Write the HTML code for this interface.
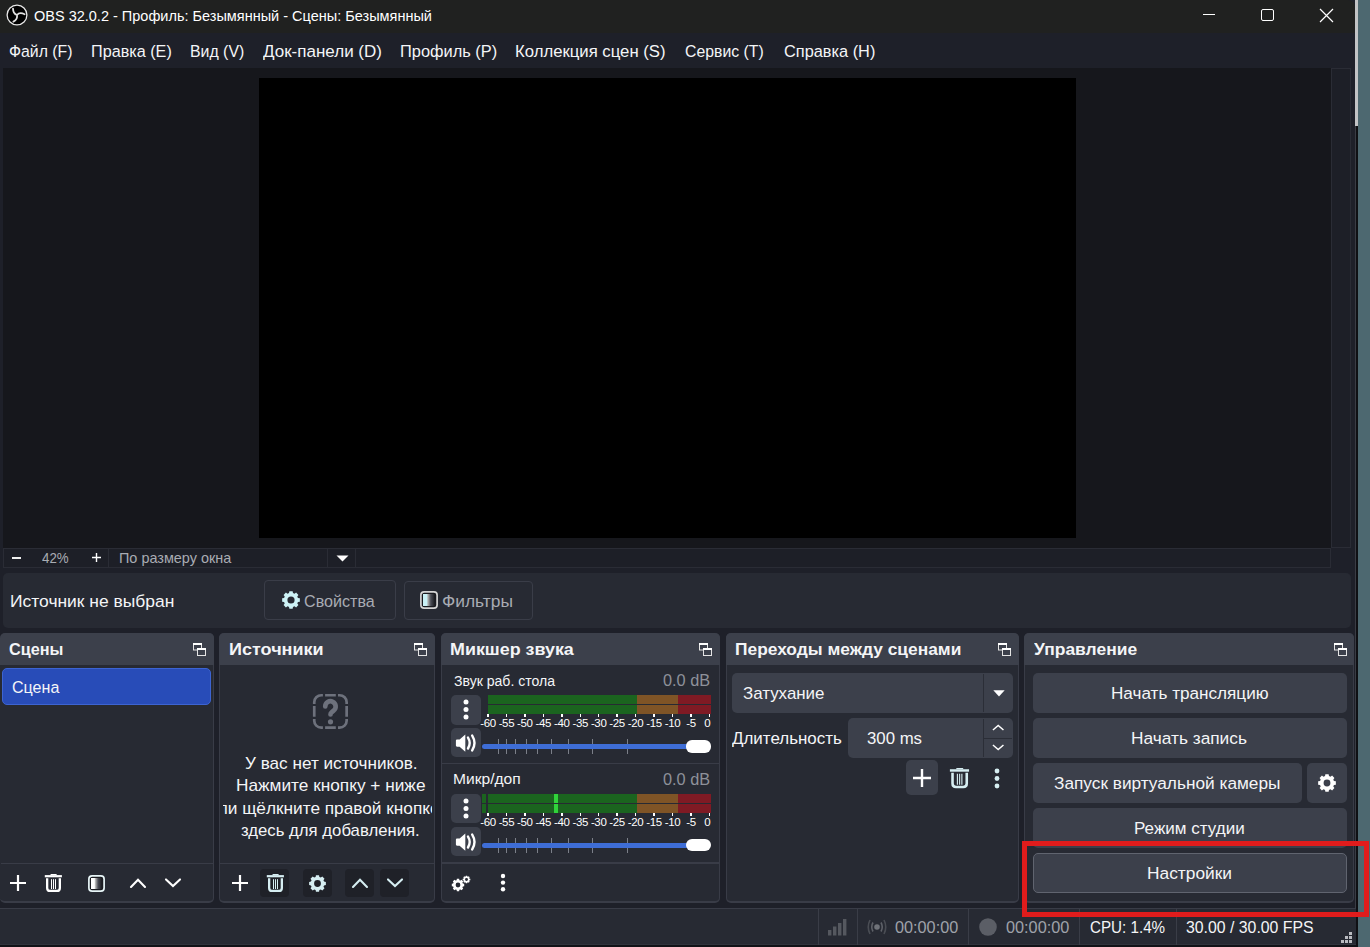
<!DOCTYPE html><html><head><meta charset="utf-8"><style>html,body{margin:0;padding:0;width:1370px;height:947px;overflow:hidden;background:#4d6870;font-family:"Liberation Sans",sans-serif;}.tx{position:absolute;white-space:nowrap;line-height:1;transform-origin:0 0;}</style></head><body>
<div style="position:absolute;left:0px;top:0px;width:1355px;height:947px;background:#1e2029;"></div>
<div style="position:absolute;left:1355px;top:0px;width:3px;height:126px;background:#c2c3c5;"></div>
<div style="position:absolute;left:1355px;top:126px;width:1px;height:821px;background:#3a3c44;"></div>
<div style="position:absolute;left:1356px;top:126px;width:2px;height:821px;background:#0f1014;"></div>
<div style="position:absolute;left:0px;top:0px;width:1355px;height:33px;background:#202120;border-top-right-radius:7px"></div>
<svg style="position:absolute;left:6px;top:4px;" width="22" height="22" viewBox="0 0 22 22"><circle cx="11" cy="11" r="9.9" fill="#000" stroke="#e8e8e8" stroke-width="1.3"/><path d="M11 11Q7.2 9.8 7 4.6M11 11Q13.6 7.8 18.6 10.2M11 11Q11.8 15.5 7.4 17.6" stroke="#e0e0e0" stroke-width="1.8" fill="none" stroke-linecap="round"/></svg>
<div style="position:absolute;left:1203px;top:14px;width:12px;height:1px;background:#ffffff;"></div>
<div style="position:absolute;left:1260.5px;top:8.5px;width:13px;height:12.5px;background:transparent;border:1.3px solid #fff;border-radius:2px;box-sizing:border-box"></div>
<svg style="position:absolute;left:1319px;top:8px;" width="15" height="15" viewBox="0 0 15 15"><path d="M1 1L14 14M14 1L1 14" stroke="#fff" stroke-width="1.2"/></svg>
<div style="position:absolute;left:0px;top:33px;width:1355px;height:35px;background:#1e2029;"></div>
<div style="position:absolute;left:3px;top:68px;width:1328px;height:480px;background:#16171c;"></div>
<div style="position:absolute;left:259px;top:78px;width:817px;height:460px;background:#000000;"></div>
<div style="position:absolute;left:1331px;top:68px;width:20px;height:480px;background:#1d1f27;border:1px solid #2a2c35;box-sizing:border-box"></div>
<div style="position:absolute;left:3px;top:548px;width:1328px;height:20px;background:#1d1f27;border:1px solid #2a2c35;box-sizing:border-box"></div>
<div style="position:absolute;left:108px;top:549px;width:1px;height:18px;background:#2a2c35;"></div>
<div style="position:absolute;left:327px;top:549px;width:1px;height:18px;background:#2a2c35;"></div>
<div style="position:absolute;left:355px;top:549px;width:1px;height:18px;background:#2a2c35;"></div>
<div style="position:absolute;left:11.5px;top:557.2px;width:9px;height:1.4px;background:#f0f0f0;"></div>
<svg style="position:absolute;left:90.6px;top:552.3px;" width="11" height="11" viewBox="0 0 11 11"><path d="M5.5 1V10M1 5.5H10" stroke="#fff" stroke-width="1.4" fill="none"/></svg>
<svg style="position:absolute;left:336px;top:555px;" width="13" height="7" viewBox="0 0 13 7"><path d="M0.5 0.5H12.5L6.5 6.5Z" fill="#fff"/></svg>
<div style="position:absolute;left:3px;top:573px;width:1348px;height:55px;background:#272a33;border-radius:5px"></div>
<div style="position:absolute;left:264px;top:580px;width:132px;height:40px;background:transparent;border:1px solid #3a3d48;border-radius:4px;box-sizing:border-box"></div>
<div style="position:absolute;left:403.5px;top:580.5px;width:129px;height:39.5px;background:transparent;border:1px solid #3a3d48;border-radius:4px;box-sizing:border-box"></div>
<svg style="position:absolute;left:280.00px;top:589.00px;" width="22" height="22" viewBox="0 0 22 22"><g transform="translate(-280.00,-589.00)"><path d="M297.92 598.01 L299.85 598.37 L299.85 601.63 L297.92 601.99 L297.30 603.49 L298.41 605.10 L296.10 607.41 L294.49 606.30 L292.99 606.92 L292.63 608.85 L289.37 608.85 L289.01 606.92 L287.51 606.30 L285.90 607.41 L283.59 605.10 L284.70 603.49 L284.08 601.99 L282.15 601.63 L282.15 598.37 L284.08 598.01 L284.70 596.51 L283.59 594.90 L285.90 592.59 L287.51 593.70 L289.01 593.08 L289.37 591.15 L292.63 591.15 L292.99 593.08 L294.49 593.70 L296.10 592.59 L298.41 594.90 L297.30 596.51Z M294.60 600.00 A3.60 3.60 0 1 0 287.40 600.00 A3.60 3.60 0 1 0 294.60 600.00Z" fill="#cdf2f6" fill-rule="evenodd"/></g></svg>
<svg style="position:absolute;left:420px;top:591px;" width="18" height="18" viewBox="0 0 18 18"><defs><linearGradient id="fg420" x1="0" x2="1"><stop offset="0" stop-color="#c9f1f6"/><stop offset="0.3" stop-color="#c9f1f6"/><stop offset="0.42" stop-color="#b0b0b0"/><stop offset="0.65" stop-color="#4a4c55"/><stop offset="1" stop-color="#17181d"/></linearGradient></defs><rect x="0.9" y="0.9" width="16.2" height="16.2" rx="3.2" fill="#1a1b20" stroke="#d4d4d4" stroke-width="1.7"/><rect x="3" y="3" width="12" height="12" fill="url(#fg420)"/></svg>
<div style="position:absolute;left:0px;top:633px;width:214px;height:270px;background:#272a33;border:1px solid #393c47;border-bottom-width:2px;border-top:none;border-left:none;border-radius:5px;box-sizing:border-box"></div>
<div style="position:absolute;left:0px;top:633px;width:214px;height:32px;background:#3c404b;border-radius:5px 5px 0 0"></div>
<div style="position:absolute;left:219px;top:633px;width:216px;height:270px;background:#272a33;border:1px solid #393c47;border-bottom-width:2px;border-top:none;border-radius:5px;box-sizing:border-box"></div>
<div style="position:absolute;left:219px;top:633px;width:216px;height:32px;background:#3c404b;border-radius:5px 5px 0 0"></div>
<div style="position:absolute;left:441px;top:633px;width:279px;height:270px;background:#272a33;border:1px solid #393c47;border-bottom-width:2px;border-top:none;border-radius:5px;box-sizing:border-box"></div>
<div style="position:absolute;left:441px;top:633px;width:279px;height:32px;background:#3c404b;border-radius:5px 5px 0 0"></div>
<div style="position:absolute;left:726px;top:633px;width:293px;height:270px;background:#272a33;border:1px solid #393c47;border-bottom-width:2px;border-top:none;border-radius:5px;box-sizing:border-box"></div>
<div style="position:absolute;left:726px;top:633px;width:293px;height:32px;background:#3c404b;border-radius:5px 5px 0 0"></div>
<div style="position:absolute;left:1024px;top:633px;width:330px;height:270px;background:#272a33;border:1px solid #393c47;border-bottom-width:2px;border-top:none;border-radius:5px;box-sizing:border-box"></div>
<div style="position:absolute;left:1024px;top:633px;width:330px;height:32px;background:#3c404b;border-radius:5px 5px 0 0"></div>
<svg style="position:absolute;left:192px;top:642px;" width="16" height="16" viewBox="0 0 16 16"><rect x="1.5" y="1.5" width="8" height="6.5" fill="none" stroke="#e4e4e4" stroke-width="1"/><rect x="1" y="1" width="9" height="2" fill="#fff"/><rect x="5.5" y="6.5" width="8" height="7" fill="#3c404b" stroke="#e4e4e4" stroke-width="1"/><rect x="5" y="6" width="9" height="2" fill="#fff"/></svg>
<svg style="position:absolute;left:413px;top:642px;" width="16" height="16" viewBox="0 0 16 16"><rect x="1.5" y="1.5" width="8" height="6.5" fill="none" stroke="#e4e4e4" stroke-width="1"/><rect x="1" y="1" width="9" height="2" fill="#fff"/><rect x="5.5" y="6.5" width="8" height="7" fill="#3c404b" stroke="#e4e4e4" stroke-width="1"/><rect x="5" y="6" width="9" height="2" fill="#fff"/></svg>
<svg style="position:absolute;left:698px;top:642px;" width="16" height="16" viewBox="0 0 16 16"><rect x="1.5" y="1.5" width="8" height="6.5" fill="none" stroke="#e4e4e4" stroke-width="1"/><rect x="1" y="1" width="9" height="2" fill="#fff"/><rect x="5.5" y="6.5" width="8" height="7" fill="#3c404b" stroke="#e4e4e4" stroke-width="1"/><rect x="5" y="6" width="9" height="2" fill="#fff"/></svg>
<svg style="position:absolute;left:997px;top:642px;" width="16" height="16" viewBox="0 0 16 16"><rect x="1.5" y="1.5" width="8" height="6.5" fill="none" stroke="#e4e4e4" stroke-width="1"/><rect x="1" y="1" width="9" height="2" fill="#fff"/><rect x="5.5" y="6.5" width="8" height="7" fill="#3c404b" stroke="#e4e4e4" stroke-width="1"/><rect x="5" y="6" width="9" height="2" fill="#fff"/></svg>
<svg style="position:absolute;left:1333px;top:642px;" width="16" height="16" viewBox="0 0 16 16"><rect x="1.5" y="1.5" width="8" height="6.5" fill="none" stroke="#e4e4e4" stroke-width="1"/><rect x="1" y="1" width="9" height="2" fill="#fff"/><rect x="5.5" y="6.5" width="8" height="7" fill="#3c404b" stroke="#e4e4e4" stroke-width="1"/><rect x="5" y="6" width="9" height="2" fill="#fff"/></svg>
<div style="position:absolute;left:2px;top:668px;width:209px;height:37px;background:#284cb8;border:1px solid #3d64d2;border-radius:5px;box-sizing:border-box"></div>
<div style="position:absolute;left:1px;top:863px;width:212px;height:1px;background:#393c47;"></div>
<svg style="position:absolute;left:9.0px;top:874.0px;" width="18" height="18" viewBox="0 0 18 18"><path d="M9.0 1V17M1 9.0H17" stroke="#fff" stroke-width="2.2" fill="none"/></svg>
<svg style="position:absolute;left:44px;top:874px;" width="20" height="21" viewBox="0 0 20 21"><g transform="scale(1.0)"><rect x="0.8" y="1.1" width="17.1" height="2.2" fill="#fff"/><path d="M6.2 1.2L6.8 0H12.4L13 1.2Z" fill="#fff"/><path d="M3.15 4.2V13.9Q3.15 16.95 6.2 16.95H12.8Q15.85 16.95 15.85 13.9V4.2" stroke="#fff" stroke-width="2.3" fill="none"/><path d="M7.5 5.2V15M9.5 5.2V15M11.5 5.2V15" stroke="#fff" stroke-width="1" fill="none"/></g></svg>
<svg style="position:absolute;left:87.5px;top:874.5px;" width="17" height="17" viewBox="0 0 17 17"><defs><linearGradient id="fg87" x1="0" x2="1"><stop offset="0" stop-color="#ffffff"/><stop offset="0.3" stop-color="#ffffff"/><stop offset="0.42" stop-color="#b0b0b0"/><stop offset="0.65" stop-color="#4a4c55"/><stop offset="1" stop-color="#17181d"/></linearGradient></defs><rect x="0.9" y="0.9" width="15.2" height="15.2" rx="3.2" fill="#1a1b20" stroke="#e8f6f8" stroke-width="1.7"/><rect x="3" y="3" width="11" height="11" fill="url(#fg87)"/></svg>
<svg style="position:absolute;left:129px;top:876px;" width="18" height="14" viewBox="0 0 18 14"><path d="M2 10.9L9 3.8L16 10.9" stroke="#fff" stroke-width="2.1" fill="none" stroke-linecap="round" stroke-linejoin="miter"/></svg>
<svg style="position:absolute;left:164px;top:876px;" width="18" height="14" viewBox="0 0 18 14"><path d="M2 3.4L9 10.1L16 3.4" stroke="#fff" stroke-width="2.1" fill="none" stroke-linecap="round" stroke-linejoin="miter"/></svg>
<svg style="position:absolute;left:311px;top:692px;" width="39" height="39" viewBox="0 0 39 39"><path d="M3.25 11.9V10.25A7 7 0 0 1 10.25 3.25H11.9M27.0 3.25H28.65A7 7 0 0 1 35.65 10.25V11.9M35.65 27.0V28.65A7 7 0 0 1 28.65 35.65H27.0M11.9 35.65H10.25A7 7 0 0 1 3.25 28.65V27.0M14.1 3.25H24.8M35.65 14.1V24.8M14.1 35.65H24.8M3.25 14.1V24.8" stroke="#6d717c" stroke-width="2.7" fill="none"/><path d="M14.25 14.45A5.2 5.2 0 1 1 22.6 18.6L20.8 20.1Q19.5 21.1 19.5 22.45" stroke="#6d717c" stroke-width="4.7" fill="none" stroke-linecap="round"/><circle cx="19.5" cy="29.8" r="2.6" fill="#6d717c"/></svg>
<div style="position:absolute;left:220px;top:863px;width:214px;height:1px;background:#393c47;"></div>
<svg style="position:absolute;left:231.0px;top:874.0px;" width="18" height="18" viewBox="0 0 18 18"><path d="M9.0 1V17M1 9.0H17" stroke="#fff" stroke-width="2.2" fill="none"/></svg>
<div style="position:absolute;left:260px;top:869px;width:28.5px;height:28px;background:#1f2128;border-radius:4px"></div>
<div style="position:absolute;left:303px;top:869px;width:28.5px;height:28px;background:#1f2128;border-radius:4px"></div>
<div style="position:absolute;left:345px;top:869px;width:28.5px;height:28px;background:#1f2128;border-radius:4px"></div>
<div style="position:absolute;left:380px;top:869px;width:28.5px;height:28px;background:#1f2128;border-radius:4px"></div>
<svg style="position:absolute;left:266px;top:874px;" width="20" height="21" viewBox="0 0 20 21"><g transform="scale(1.0)"><rect x="0.8" y="1.1" width="17.1" height="2.2" fill="#d6eef2"/><path d="M6.2 1.2L6.8 0H12.4L13 1.2Z" fill="#d6eef2"/><path d="M3.15 4.2V13.9Q3.15 16.95 6.2 16.95H12.8Q15.85 16.95 15.85 13.9V4.2" stroke="#d6eef2" stroke-width="2.3" fill="none"/><path d="M7.5 5.2V15M9.5 5.2V15M11.5 5.2V15" stroke="#d6eef2" stroke-width="1" fill="none"/></g></svg>
<svg style="position:absolute;left:306.50px;top:872.50px;" width="21" height="21" viewBox="0 0 21 21"><g transform="translate(-306.50,-872.50)"><path d="M323.54 881.12 L325.36 881.46 L325.36 884.54 L323.54 884.88 L322.95 886.29 L324.00 887.82 L321.82 890.00 L320.29 888.95 L318.88 889.54 L318.54 891.36 L315.46 891.36 L315.12 889.54 L313.71 888.95 L312.18 890.00 L310.00 887.82 L311.05 886.29 L310.46 884.88 L308.64 884.54 L308.64 881.46 L310.46 881.12 L311.05 879.71 L310.00 878.18 L312.18 876.00 L313.71 877.05 L315.12 876.46 L315.46 874.64 L318.54 874.64 L318.88 876.46 L320.29 877.05 L321.82 876.00 L324.00 878.18 L322.95 879.71Z M320.40 883.00 A3.40 3.40 0 1 0 313.60 883.00 A3.40 3.40 0 1 0 320.40 883.00Z" fill="#d6eef2" fill-rule="evenodd"/></g></svg>
<svg style="position:absolute;left:351px;top:876px;" width="18" height="14" viewBox="0 0 18 14"><path d="M2 10.9L9 3.8L16 10.9" stroke="#d6eef2" stroke-width="2.1" fill="none" stroke-linecap="round" stroke-linejoin="miter"/></svg>
<svg style="position:absolute;left:386px;top:876px;" width="18" height="14" viewBox="0 0 18 14"><path d="M2 3.4L9 10.1L16 3.4" stroke="#d6eef2" stroke-width="2.1" fill="none" stroke-linecap="round" stroke-linejoin="miter"/></svg>
<div style="position:absolute;left:451px;top:695px;width:29.5px;height:29.5px;background:#3c404b;border-radius:5px"></div>
<div style="position:absolute;left:451px;top:728.4px;width:29.5px;height:29px;background:#3c404b;border-radius:5px"></div>
<svg style="position:absolute;left:462.00px;top:698.35px;" width="8" height="23" viewBox="0 0 8 23"><circle cx="4" cy="4.00" r="2.5" fill="#fff"/><circle cx="4" cy="11.55" r="2.5" fill="#fff"/><circle cx="4" cy="19.10" r="2.5" fill="#fff"/></svg>
<svg style="position:absolute;left:455px;top:733px;" width="23" height="21" viewBox="0 0 23 21"><path d="M0.9 7.6Q0.9 6.5 2 6.5H4.6L10.3 1.4V18.7L4.6 13.7H2Q0.9 13.7 0.9 12.6Z" fill="#fff"/><path d="M13 4.6Q16.4 10 13 15.5" stroke="#fff" stroke-width="2.4" fill="none" stroke-linecap="round"/><path d="M17.2 2.6Q21.8 10 17.2 17.4" stroke="#fff" stroke-width="2.4" fill="none" stroke-linecap="round"/></svg>
<div style="position:absolute;left:488px;top:695px;width:149px;height:9px;background:#1b641f;"></div><div style="position:absolute;left:637px;top:695px;width:41px;height:9px;background:#7f5426;"></div><div style="position:absolute;left:678px;top:695px;width:33px;height:9px;background:#7f1a24;"></div><div style="position:absolute;left:488px;top:705px;width:149px;height:9px;background:#1b641f;"></div><div style="position:absolute;left:637px;top:705px;width:41px;height:9px;background:#7f5426;"></div><div style="position:absolute;left:678px;top:705px;width:33px;height:9px;background:#7f1a24;"></div>
<div style="position:absolute;left:487.25px;top:714px;width:1.5px;height:3px;background:#ffffff;"></div>
<div style="position:absolute;left:505.70px;top:714px;width:1.5px;height:3px;background:#ffffff;"></div>
<div style="position:absolute;left:524.15px;top:714px;width:1.5px;height:3px;background:#ffffff;"></div>
<div style="position:absolute;left:542.60px;top:714px;width:1.5px;height:3px;background:#ffffff;"></div>
<div style="position:absolute;left:561.05px;top:714px;width:1.5px;height:3px;background:#ffffff;"></div>
<div style="position:absolute;left:579.50px;top:714px;width:1.5px;height:3px;background:#ffffff;"></div>
<div style="position:absolute;left:597.95px;top:714px;width:1.5px;height:3px;background:#ffffff;"></div>
<div style="position:absolute;left:616.40px;top:714px;width:1.5px;height:3px;background:#ffffff;"></div>
<div style="position:absolute;left:634.85px;top:714px;width:1.5px;height:3px;background:#ffffff;"></div>
<div style="position:absolute;left:653.30px;top:714px;width:1.5px;height:3px;background:#ffffff;"></div>
<div style="position:absolute;left:671.75px;top:714px;width:1.5px;height:3px;background:#ffffff;"></div>
<div style="position:absolute;left:690.20px;top:714px;width:1.5px;height:3px;background:#ffffff;"></div>
<div style="position:absolute;left:708.65px;top:714px;width:1.5px;height:3px;background:#ffffff;"></div>
<span class="tx" style="left:468.00px;top:718.30px;width:40px;text-align:center;font-size:11.5px;color:#fff;letter-spacing:-0.35px">-60</span>
<span class="tx" style="left:486.45px;top:718.30px;width:40px;text-align:center;font-size:11.5px;color:#fff;letter-spacing:-0.35px">-55</span>
<span class="tx" style="left:504.90px;top:718.30px;width:40px;text-align:center;font-size:11.5px;color:#fff;letter-spacing:-0.35px">-50</span>
<span class="tx" style="left:523.35px;top:718.30px;width:40px;text-align:center;font-size:11.5px;color:#fff;letter-spacing:-0.35px">-45</span>
<span class="tx" style="left:541.80px;top:718.30px;width:40px;text-align:center;font-size:11.5px;color:#fff;letter-spacing:-0.35px">-40</span>
<span class="tx" style="left:560.25px;top:718.30px;width:40px;text-align:center;font-size:11.5px;color:#fff;letter-spacing:-0.35px">-35</span>
<span class="tx" style="left:578.70px;top:718.30px;width:40px;text-align:center;font-size:11.5px;color:#fff;letter-spacing:-0.35px">-30</span>
<span class="tx" style="left:597.15px;top:718.30px;width:40px;text-align:center;font-size:11.5px;color:#fff;letter-spacing:-0.35px">-25</span>
<span class="tx" style="left:615.60px;top:718.30px;width:40px;text-align:center;font-size:11.5px;color:#fff;letter-spacing:-0.35px">-20</span>
<span class="tx" style="left:634.05px;top:718.30px;width:40px;text-align:center;font-size:11.5px;color:#fff;letter-spacing:-0.35px">-15</span>
<span class="tx" style="left:652.50px;top:718.30px;width:40px;text-align:center;font-size:11.5px;color:#fff;letter-spacing:-0.35px">-10</span>
<span class="tx" style="left:670.95px;top:718.30px;width:40px;text-align:center;font-size:11.5px;color:#fff;letter-spacing:-0.35px">-5</span>
<span class="tx" style="left:687.40px;top:718.30px;width:40px;text-align:center;font-size:11.5px;color:#fff;letter-spacing:-0.35px">0</span>
<div style="position:absolute;left:498.0px;top:739.0px;width:1px;height:15px;background:#7b7f89;"></div>
<div style="position:absolute;left:506.0px;top:739.0px;width:1px;height:15px;background:#7b7f89;"></div>
<div style="position:absolute;left:514.7px;top:739.0px;width:1px;height:15px;background:#7b7f89;"></div>
<div style="position:absolute;left:526.0px;top:739.0px;width:1px;height:15px;background:#7b7f89;"></div>
<div style="position:absolute;left:536.9px;top:739.0px;width:1px;height:15px;background:#7b7f89;"></div>
<div style="position:absolute;left:551.1px;top:739.0px;width:1px;height:15px;background:#7b7f89;"></div>
<div style="position:absolute;left:568.0px;top:739.0px;width:1px;height:15px;background:#7b7f89;"></div>
<div style="position:absolute;left:591.9px;top:739.0px;width:1px;height:15px;background:#7b7f89;"></div>
<div style="position:absolute;left:627.0px;top:739.0px;width:1px;height:15px;background:#7b7f89;"></div>
<div style="position:absolute;left:482px;top:744.0px;width:210px;height:5px;background:#3e6dd6;border-radius:2.5px"></div>
<div style="position:absolute;left:685.5px;top:740.0px;width:25px;height:12.5px;background:#ffffff;border-radius:6px"></div>
<div style="position:absolute;left:451px;top:793.6px;width:29.5px;height:29.5px;background:#3c404b;border-radius:5px"></div>
<div style="position:absolute;left:451px;top:827.0px;width:29.5px;height:29px;background:#3c404b;border-radius:5px"></div>
<svg style="position:absolute;left:462.00px;top:796.95px;" width="8" height="23" viewBox="0 0 8 23"><circle cx="4" cy="4.00" r="2.5" fill="#fff"/><circle cx="4" cy="11.55" r="2.5" fill="#fff"/><circle cx="4" cy="19.10" r="2.5" fill="#fff"/></svg>
<svg style="position:absolute;left:455px;top:831.6px;" width="23" height="21" viewBox="0 0 23 21"><path d="M0.9 7.6Q0.9 6.5 2 6.5H4.6L10.3 1.4V18.7L4.6 13.7H2Q0.9 13.7 0.9 12.6Z" fill="#fff"/><path d="M13 4.6Q16.4 10 13 15.5" stroke="#fff" stroke-width="2.4" fill="none" stroke-linecap="round"/><path d="M17.2 2.6Q21.8 10 17.2 17.4" stroke="#fff" stroke-width="2.4" fill="none" stroke-linecap="round"/></svg>
<div style="position:absolute;left:488px;top:793.6px;width:149px;height:9px;background:#1b641f;"></div><div style="position:absolute;left:637px;top:793.6px;width:41px;height:9px;background:#7f5426;"></div><div style="position:absolute;left:678px;top:793.6px;width:33px;height:9px;background:#7f1a24;"></div><div style="position:absolute;left:482px;top:793.6px;width:4px;height:9px;background:#1b641f;"></div><div style="position:absolute;left:554px;top:793.6px;width:4px;height:9px;background:#31d33b;"></div><div style="position:absolute;left:488px;top:803.6px;width:149px;height:9px;background:#1b641f;"></div><div style="position:absolute;left:637px;top:803.6px;width:41px;height:9px;background:#7f5426;"></div><div style="position:absolute;left:678px;top:803.6px;width:33px;height:9px;background:#7f1a24;"></div><div style="position:absolute;left:482px;top:803.6px;width:4px;height:9px;background:#1b641f;"></div><div style="position:absolute;left:554px;top:803.6px;width:4px;height:9px;background:#31d33b;"></div>
<div style="position:absolute;left:487.25px;top:812.6px;width:1.5px;height:3px;background:#ffffff;"></div>
<div style="position:absolute;left:505.70px;top:812.6px;width:1.5px;height:3px;background:#ffffff;"></div>
<div style="position:absolute;left:524.15px;top:812.6px;width:1.5px;height:3px;background:#ffffff;"></div>
<div style="position:absolute;left:542.60px;top:812.6px;width:1.5px;height:3px;background:#ffffff;"></div>
<div style="position:absolute;left:561.05px;top:812.6px;width:1.5px;height:3px;background:#ffffff;"></div>
<div style="position:absolute;left:579.50px;top:812.6px;width:1.5px;height:3px;background:#ffffff;"></div>
<div style="position:absolute;left:597.95px;top:812.6px;width:1.5px;height:3px;background:#ffffff;"></div>
<div style="position:absolute;left:616.40px;top:812.6px;width:1.5px;height:3px;background:#ffffff;"></div>
<div style="position:absolute;left:634.85px;top:812.6px;width:1.5px;height:3px;background:#ffffff;"></div>
<div style="position:absolute;left:653.30px;top:812.6px;width:1.5px;height:3px;background:#ffffff;"></div>
<div style="position:absolute;left:671.75px;top:812.6px;width:1.5px;height:3px;background:#ffffff;"></div>
<div style="position:absolute;left:690.20px;top:812.6px;width:1.5px;height:3px;background:#ffffff;"></div>
<div style="position:absolute;left:708.65px;top:812.6px;width:1.5px;height:3px;background:#ffffff;"></div>
<span class="tx" style="left:468.00px;top:816.90px;width:40px;text-align:center;font-size:11.5px;color:#fff;letter-spacing:-0.35px">-60</span>
<span class="tx" style="left:486.45px;top:816.90px;width:40px;text-align:center;font-size:11.5px;color:#fff;letter-spacing:-0.35px">-55</span>
<span class="tx" style="left:504.90px;top:816.90px;width:40px;text-align:center;font-size:11.5px;color:#fff;letter-spacing:-0.35px">-50</span>
<span class="tx" style="left:523.35px;top:816.90px;width:40px;text-align:center;font-size:11.5px;color:#fff;letter-spacing:-0.35px">-45</span>
<span class="tx" style="left:541.80px;top:816.90px;width:40px;text-align:center;font-size:11.5px;color:#fff;letter-spacing:-0.35px">-40</span>
<span class="tx" style="left:560.25px;top:816.90px;width:40px;text-align:center;font-size:11.5px;color:#fff;letter-spacing:-0.35px">-35</span>
<span class="tx" style="left:578.70px;top:816.90px;width:40px;text-align:center;font-size:11.5px;color:#fff;letter-spacing:-0.35px">-30</span>
<span class="tx" style="left:597.15px;top:816.90px;width:40px;text-align:center;font-size:11.5px;color:#fff;letter-spacing:-0.35px">-25</span>
<span class="tx" style="left:615.60px;top:816.90px;width:40px;text-align:center;font-size:11.5px;color:#fff;letter-spacing:-0.35px">-20</span>
<span class="tx" style="left:634.05px;top:816.90px;width:40px;text-align:center;font-size:11.5px;color:#fff;letter-spacing:-0.35px">-15</span>
<span class="tx" style="left:652.50px;top:816.90px;width:40px;text-align:center;font-size:11.5px;color:#fff;letter-spacing:-0.35px">-10</span>
<span class="tx" style="left:670.95px;top:816.90px;width:40px;text-align:center;font-size:11.5px;color:#fff;letter-spacing:-0.35px">-5</span>
<span class="tx" style="left:687.40px;top:816.90px;width:40px;text-align:center;font-size:11.5px;color:#fff;letter-spacing:-0.35px">0</span>
<div style="position:absolute;left:498.0px;top:837.6px;width:1px;height:15px;background:#7b7f89;"></div>
<div style="position:absolute;left:506.0px;top:837.6px;width:1px;height:15px;background:#7b7f89;"></div>
<div style="position:absolute;left:514.7px;top:837.6px;width:1px;height:15px;background:#7b7f89;"></div>
<div style="position:absolute;left:526.0px;top:837.6px;width:1px;height:15px;background:#7b7f89;"></div>
<div style="position:absolute;left:536.9px;top:837.6px;width:1px;height:15px;background:#7b7f89;"></div>
<div style="position:absolute;left:551.1px;top:837.6px;width:1px;height:15px;background:#7b7f89;"></div>
<div style="position:absolute;left:568.0px;top:837.6px;width:1px;height:15px;background:#7b7f89;"></div>
<div style="position:absolute;left:591.9px;top:837.6px;width:1px;height:15px;background:#7b7f89;"></div>
<div style="position:absolute;left:627.0px;top:837.6px;width:1px;height:15px;background:#7b7f89;"></div>
<div style="position:absolute;left:482px;top:842.6px;width:210px;height:5px;background:#3e6dd6;border-radius:2.5px"></div>
<div style="position:absolute;left:685.5px;top:838.6px;width:25px;height:12.5px;background:#ffffff;border-radius:6px"></div>
<div style="position:absolute;left:442px;top:763px;width:277px;height:1.2px;background:#393c47;"></div>
<div style="position:absolute;left:442px;top:862px;width:277px;height:1.6px;background:#393c47;"></div>
<svg style="position:absolute;left:450.00px;top:876.70px;" width="16" height="16" viewBox="0 0 16 16"><g transform="translate(-450.00,-876.70)"><path d="M462.84 883.31 L464.20 883.56 L464.20 885.84 L462.84 886.09 L462.41 887.14 L463.19 888.27 L461.57 889.89 L460.44 889.11 L459.39 889.54 L459.14 890.90 L456.86 890.90 L456.61 889.54 L455.56 889.11 L454.43 889.89 L452.81 888.27 L453.59 887.14 L453.16 886.09 L451.80 885.84 L451.80 883.56 L453.16 883.31 L453.59 882.26 L452.81 881.13 L454.43 879.51 L455.56 880.29 L456.61 879.86 L456.86 878.50 L459.14 878.50 L459.39 879.86 L460.44 880.29 L461.57 879.51 L463.19 881.13 L462.41 882.26Z M460.39 884.70 A2.39 2.39 0 1 0 455.61 884.70 A2.39 2.39 0 1 0 460.39 884.70Z" fill="#fff" fill-rule="evenodd"/></g></svg>
<svg style="position:absolute;left:461.00px;top:873.50px;" width="11" height="11" viewBox="0 0 11 11"><g transform="translate(-461.00,-873.50)"><path d="M469.50 878.14 L470.34 878.29 L470.34 879.71 L469.50 879.86 L469.23 880.51 L469.71 881.21 L468.71 882.21 L468.01 881.73 L467.36 882.00 L467.21 882.84 L465.79 882.84 L465.64 882.00 L464.99 881.73 L464.29 882.21 L463.29 881.21 L463.77 880.51 L463.50 879.86 L462.66 879.71 L462.66 878.29 L463.50 878.14 L463.77 877.49 L463.29 876.79 L464.29 875.79 L464.99 876.27 L465.64 876.00 L465.79 875.16 L467.21 875.16 L467.36 876.00 L468.01 876.27 L468.71 875.79 L469.71 876.79 L469.23 877.49Z M467.98 879.00 A1.48 1.48 0 1 0 465.02 879.00 A1.48 1.48 0 1 0 467.98 879.00Z" fill="#fff" fill-rule="evenodd"/></g></svg>
<svg style="position:absolute;left:498.80px;top:872.40px;" width="8" height="21" viewBox="0 0 8 21"><circle cx="4" cy="4.00" r="2.2" fill="#fff"/><circle cx="4" cy="10.60" r="2.2" fill="#fff"/><circle cx="4" cy="17.20" r="2.2" fill="#fff"/></svg>
<div style="position:absolute;left:732px;top:673px;width:281px;height:39.5px;background:#3c404b;border-radius:5px"></div>
<div style="position:absolute;left:983px;top:674px;width:1px;height:38px;background:#2b2e37;"></div>
<svg style="position:absolute;left:992.5px;top:690px;" width="12" height="7" viewBox="0 0 12 7"><path d="M0.3 0.3H11.7L6 6.5Z" fill="#fff"/></svg>
<div style="position:absolute;left:848px;top:718px;width:165px;height:39.5px;background:#3c404b;border-radius:5px"></div>
<div style="position:absolute;left:983px;top:719px;width:1px;height:38px;background:#2b2e37;"></div>
<div style="position:absolute;left:984px;top:738px;width:28px;height:1px;background:#2b2e37;"></div>
<svg style="position:absolute;left:991.8px;top:724.3px;" width="12.4" height="7" viewBox="0 0 12.4 7"><path d="M1.5 5.5L6.2 1.5L10.9 5.5" stroke="#fff" stroke-width="1.5" fill="none" stroke-linecap="square"/></svg>
<svg style="position:absolute;left:991.8px;top:743.6px;" width="12.4" height="7" viewBox="0 0 12.4 7"><path d="M1.5 1.5L6.2 5.5L10.9 1.5" stroke="#fff" stroke-width="1.5" fill="none" stroke-linecap="square"/></svg>
<div style="position:absolute;left:906px;top:760px;width:32px;height:34.5px;background:#3c404b;border-radius:5px"></div>
<svg style="position:absolute;left:912.0px;top:768.0px;" width="20" height="20" viewBox="0 0 20 20"><path d="M10.0 1V19M1 10.0H19" stroke="#fff" stroke-width="2.4" fill="none"/></svg>
<svg style="position:absolute;left:949.1px;top:767.6px;" width="22" height="23" viewBox="0 0 22 23"><g transform="scale(1.12)"><rect x="0.8" y="1.1" width="17.1" height="2.2" fill="#d6eef2"/><path d="M6.2 1.2L6.8 0H12.4L13 1.2Z" fill="#d6eef2"/><path d="M3.15 4.2V13.9Q3.15 16.95 6.2 16.95H12.8Q15.85 16.95 15.85 13.9V4.2" stroke="#d6eef2" stroke-width="2.3" fill="none"/><path d="M7.5 5.2V15M9.5 5.2V15M11.5 5.2V15" stroke="#d6eef2" stroke-width="1" fill="none"/></g></svg>
<svg style="position:absolute;left:993.00px;top:766.50px;" width="8" height="23" viewBox="0 0 8 23"><circle cx="4" cy="4.00" r="2.4" fill="#d6eef2"/><circle cx="4" cy="11.50" r="2.4" fill="#d6eef2"/><circle cx="4" cy="19.00" r="2.4" fill="#d6eef2"/></svg>
<div style="position:absolute;left:1033px;top:673px;width:314px;height:39.5px;background:#3c404b;border-radius:5px"></div>
<div style="position:absolute;left:1033px;top:718px;width:314px;height:39.5px;background:#3c404b;border-radius:5px"></div>
<div style="position:absolute;left:1033px;top:763px;width:269px;height:39.5px;background:#3c404b;border-radius:5px"></div>
<div style="position:absolute;left:1307px;top:763px;width:40px;height:39.5px;background:#3c404b;border-radius:5px"></div>
<div style="position:absolute;left:1033px;top:808px;width:314px;height:39.5px;background:#3c404b;border-radius:5px"></div>
<div style="position:absolute;left:1033px;top:852.8px;width:314px;height:40px;background:#3c404b;border:1px solid #60646f;border-radius:5px;box-sizing:border-box"></div>
<svg style="position:absolute;left:1316.00px;top:771.80px;" width="22" height="22" viewBox="0 0 22 22"><g transform="translate(-1316.00,-771.80)"><path d="M1333.92 780.81 L1335.85 781.17 L1335.85 784.43 L1333.92 784.79 L1333.30 786.29 L1334.41 787.90 L1332.10 790.21 L1330.49 789.10 L1328.99 789.72 L1328.63 791.65 L1325.37 791.65 L1325.01 789.72 L1323.51 789.10 L1321.90 790.21 L1319.59 787.90 L1320.70 786.29 L1320.08 784.79 L1318.15 784.43 L1318.15 781.17 L1320.08 780.81 L1320.70 779.31 L1319.59 777.70 L1321.90 775.39 L1323.51 776.50 L1325.01 775.88 L1325.37 773.95 L1328.63 773.95 L1328.99 775.88 L1330.49 776.50 L1332.10 775.39 L1334.41 777.70 L1333.30 779.31Z M1330.42 782.80 A3.42 3.42 0 1 0 1323.58 782.80 A3.42 3.42 0 1 0 1330.42 782.80Z" fill="#fff" fill-rule="evenodd"/></g></svg>
<div style="position:absolute;left:0px;top:908px;width:1356px;height:1px;background:#393c47;"></div>
<div style="position:absolute;left:0px;top:909px;width:1356px;height:36px;background:#272a33;"></div>
<div style="position:absolute;left:0px;top:944px;width:1356px;height:1px;background:#30333c;"></div>
<div style="position:absolute;left:0px;top:945px;width:1356px;height:2px;background:#111217;"></div>
<div style="position:absolute;left:818px;top:909px;width:1px;height:36px;background:#3a3d47;"></div>
<div style="position:absolute;left:857px;top:909px;width:1px;height:36px;background:#3a3d47;"></div>
<div style="position:absolute;left:968px;top:909px;width:1px;height:36px;background:#3a3d47;"></div>
<div style="position:absolute;left:1079px;top:909px;width:1px;height:36px;background:#3a3d47;"></div>
<div style="position:absolute;left:1176px;top:909px;width:1px;height:36px;background:#3a3d47;"></div>
<svg style="position:absolute;left:827px;top:918px;" width="21" height="18" viewBox="0 0 21 18"><rect x="1" y="12" width="3.4" height="5.5" fill="#55585f"/><rect x="6" y="8.5" width="3.4" height="9" fill="#55585f"/><rect x="11" y="5" width="3.4" height="12.5" fill="#55585f"/><rect x="16" y="1" width="3.4" height="16.5" fill="#55585f"/></svg>
<svg style="position:absolute;left:866px;top:917px;" width="22" height="20" viewBox="0 0 22 20"><circle cx="11" cy="10" r="2.8" fill="#6f7279"/><path d="M7 5.5Q4.5 10 7 14.5M15 5.5Q17.5 10 15 14.5" stroke="#5e6168" stroke-width="1.6" fill="none"/><path d="M4 3Q0.5 10 4 17M18 3Q21.5 10 18 17" stroke="#4a4d54" stroke-width="1.6" fill="none"/></svg>
<svg style="position:absolute;left:979px;top:918px;" width="18" height="18" viewBox="0 0 18 18"><circle cx="9" cy="9" r="8.8" fill="#5b5e66"/></svg>
<div style="position:absolute;left:1349px;top:932px;width:2.6px;height:2.6px;background:#b9bbc0;"></div>
<div style="position:absolute;left:1345px;top:936px;width:2.6px;height:2.6px;background:#b9bbc0;"></div>
<div style="position:absolute;left:1349px;top:936px;width:2.6px;height:2.6px;background:#b9bbc0;"></div>
<div style="position:absolute;left:1341px;top:940px;width:2.6px;height:2.6px;background:#b9bbc0;"></div>
<div style="position:absolute;left:1345px;top:940px;width:2.6px;height:2.6px;background:#b9bbc0;"></div>
<div style="position:absolute;left:1349px;top:940px;width:2.6px;height:2.6px;background:#b9bbc0;"></div>
<span class="tx" style="left:34.20px;top:8.74px;font-size:14.6px;font-weight:normal;color:#ffffff;transform:scaleX(0.9936)">OBS 32.0.2 - Профиль: Безымянный - Сцены: Безымянный</span>
<span class="tx" style="left:8.50px;top:43.96px;font-size:16.7px;font-weight:normal;color:#f4f5f7;transform:scaleX(0.9486)">Файл (F)</span>
<span class="tx" style="left:90.73px;top:43.96px;font-size:16.7px;font-weight:normal;color:#f4f5f7;transform:scaleX(0.9707)">Правка (E)</span>
<span class="tx" style="left:190.25px;top:43.96px;font-size:16.7px;font-weight:normal;color:#f4f5f7;transform:scaleX(0.9511)">Вид (V)</span>
<span class="tx" style="left:263.10px;top:43.96px;font-size:16.7px;font-weight:normal;color:#f4f5f7;transform:scaleX(1.0190)">Док-панели (D)</span>
<span class="tx" style="left:399.82px;top:43.96px;font-size:16.7px;font-weight:normal;color:#f4f5f7;transform:scaleX(0.9819)">Профиль (P)</span>
<span class="tx" style="left:515.00px;top:43.96px;font-size:16.7px;font-weight:normal;color:#f4f5f7;transform:scaleX(1.0015)">Коллекция сцен (S)</span>
<span class="tx" style="left:685.40px;top:43.96px;font-size:16.7px;font-weight:normal;color:#f4f5f7;transform:scaleX(0.9475)">Сервис (T)</span>
<span class="tx" style="left:783.80px;top:43.96px;font-size:16.7px;font-weight:normal;color:#f4f5f7;transform:scaleX(0.9794)">Справка (H)</span>
<span class="tx" style="left:42.00px;top:550.88px;font-size:14.2px;font-weight:normal;color:#a9acb3;transform:scaleX(0.9381)">42%</span>
<span class="tx" style="left:119.08px;top:550.88px;font-size:14.2px;font-weight:normal;color:#a9acb3;transform:scaleX(1.0164)">По размеру окна</span>
<span class="tx" style="left:10.35px;top:594.16px;font-size:16.7px;font-weight:normal;color:#f4f5f7;transform:scaleX(1.0456)">Источник не выбран</span>
<span class="tx" style="left:303.60px;top:593.96px;font-size:16.7px;font-weight:normal;color:#a9acb3;transform:scaleX(0.9649)">Свойства</span>
<span class="tx" style="left:442.20px;top:593.96px;font-size:16.7px;font-weight:normal;color:#a9acb3;transform:scaleX(1.0424)">Фильтры</span>
<span class="tx" style="left:8.70px;top:641.96px;font-size:16.7px;font-weight:bold;color:#f4f5f7;transform:scaleX(0.9718)">Сцены</span>
<span class="tx" style="left:229.42px;top:641.96px;font-size:16.7px;font-weight:bold;color:#f4f5f7;transform:scaleX(1.0801)">Источники</span>
<span class="tx" style="left:450.43px;top:641.96px;font-size:16.7px;font-weight:bold;color:#f4f5f7;transform:scaleX(1.0711)">Микшер звука</span>
<span class="tx" style="left:735.06px;top:641.96px;font-size:16.7px;font-weight:bold;color:#f4f5f7;transform:scaleX(1.0401)">Переходы между сценами</span>
<span class="tx" style="left:1034.00px;top:641.96px;font-size:16.7px;font-weight:bold;color:#f4f5f7;transform:scaleX(1.0454)">Управление</span>
<span class="tx" style="left:12.00px;top:679.96px;font-size:16.7px;font-weight:normal;color:#f4f5f7;transform:scaleX(0.9616)">Сцена</span>
<span class="tx" style="left:244.70px;top:755.22px;font-size:16.4px;font-weight:normal;color:#f4f5f7;transform:scaleX(1.0463)">У вас нет источников.</span>
<span class="tx" style="left:235.95px;top:777.22px;font-size:16.4px;font-weight:normal;color:#f4f5f7;transform:scaleX(1.0523)">Нажмите кнопку + ниже</span>
<div style="position:absolute;left:223px;top:796.22px;width:209px;height:24.4px;overflow:hidden"><span class="tx" style="left:-15.20px;top:4px;font-size:16.4px;color:#f4f5f7;transform:scaleX(1.0523)">или щёлкните правой кнопкой мыши</span></div>
<span class="tx" style="left:241.40px;top:822.22px;font-size:16.4px;font-weight:normal;color:#f4f5f7;transform:scaleX(1.0207)">здесь для добавления.</span>
<span class="tx" style="left:454.20px;top:675.02px;font-size:13.8px;font-weight:normal;color:#f4f5f7;transform:scaleX(1.0188)">Звук раб. стола</span>
<span class="tx" style="left:662.80px;top:671.81px;font-size:17px;font-weight:normal;color:#8e919a;transform:scaleX(0.9588)">0.0 dB</span>
<span class="tx" style="left:453.07px;top:772.52px;font-size:13.8px;font-weight:normal;color:#f4f5f7;transform:scaleX(1.1289)">Микр/доп</span>
<span class="tx" style="left:662.80px;top:771.31px;font-size:17px;font-weight:normal;color:#8e919a;transform:scaleX(0.9588)">0.0 dB</span>
<span class="tx" style="left:743.00px;top:684.71px;font-size:17px;font-weight:normal;color:#f4f5f7;transform:scaleX(0.9942)">Затухание</span>
<span class="tx" style="left:732.00px;top:729.51px;font-size:17px;font-weight:normal;color:#f4f5f7;transform:scaleX(0.9971)">Длительность</span>
<span class="tx" style="left:866.70px;top:729.51px;font-size:17px;font-weight:normal;color:#f4f5f7;transform:scaleX(0.9865)">300 ms</span>
<span class="tx" style="left:1110.97px;top:685.76px;font-size:16.7px;font-weight:normal;color:#f4f5f7;transform:scaleX(1.0266)">Начать трансляцию</span>
<span class="tx" style="left:1131.16px;top:731.06px;font-size:16.7px;font-weight:normal;color:#f4f5f7;transform:scaleX(1.0362)">Начать запись</span>
<span class="tx" style="left:1054.40px;top:775.96px;font-size:16.7px;font-weight:normal;color:#f4f5f7;transform:scaleX(1.0336)">Запуск виртуальной камеры</span>
<span class="tx" style="left:1133.98px;top:820.96px;font-size:16.7px;font-weight:normal;color:#f4f5f7;transform:scaleX(1.0214)">Режим студии</span>
<span class="tx" style="left:1146.96px;top:865.66px;font-size:16.7px;font-weight:normal;color:#f4f5f7;transform:scaleX(1.0385)">Настройки</span>
<span class="tx" style="left:894.60px;top:920.05px;font-size:16.6px;font-weight:normal;color:#9fa2aa;transform:scaleX(0.9788)">00:00:00</span>
<span class="tx" style="left:1005.80px;top:920.05px;font-size:16.6px;font-weight:normal;color:#9fa2aa;transform:scaleX(0.9804)">00:00:00</span>
<span class="tx" style="left:1090.30px;top:919.85px;font-size:16.6px;font-weight:normal;color:#f4f5f7;transform:scaleX(0.9147)">CPU: 1.4%</span>
<span class="tx" style="left:1185.80px;top:919.65px;font-size:16.6px;font-weight:normal;color:#f4f5f7;transform:scaleX(0.9537)">30.00 / 30.00 FPS</span>
<div style="position:absolute;left:1021.5px;top:841px;width:347.5px;height:75.5px;background:transparent;border:5.3px solid #e01c1c;box-sizing:border-box"></div>
</body></html>
